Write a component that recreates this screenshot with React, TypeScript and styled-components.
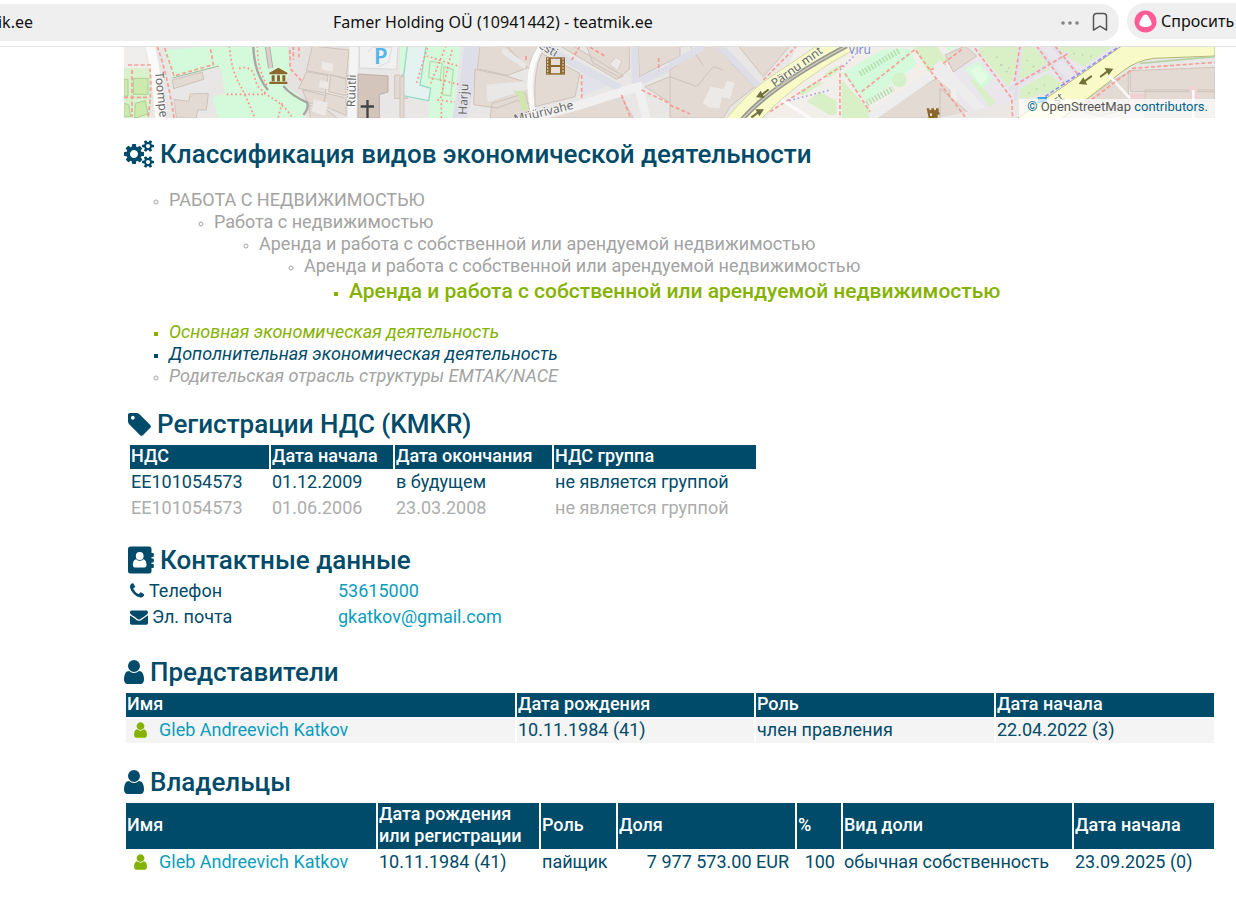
import React from 'react';
import styled, { createGlobalStyle } from 'styled-components';

const navy = '#004b69';
const cyan = '#0a9dbd';
const lime = '#85b200';
const muted = '#a3a3a3';

const GlobalStyle = createGlobalStyle`
  body {
    margin: 0;
    background: #fff;
    color: ${navy};
    font-family: Roboto, "Noto Sans", sans-serif;
    font-size: 18px;
    line-height: 22px;
    overflow-x: hidden;
  }
  * { box-sizing: border-box; }
`;

/* ---------- browser bar ---------- */

const BrowserBar = styled.header`
  display: flex;
  align-items: flex-start;
  gap: 8px;
  height: 47px;
  padding-top: 3px;
  border-bottom: 1px solid #e2e2e2;
  color: #111;
  font-family: "Noto Sans", sans-serif;
  font-size: 16px;
  overflow: hidden;
`;

const AddressField = styled.div`
  flex: 1;
  display: flex;
  align-items: center;
  height: 37px;
  margin-top: 1px;
  padding: 0 11px 2px 0;
  background: #efefef;
  border-radius: 0 18px 18px 0;
`;

const Domain = styled.span`
  width: 33px;
  display: flex;
  justify-content: flex-end;
  white-space: nowrap;
`;

const PageTitle = styled.span`
  flex: 1;
  padding-left: 300px;
  white-space: nowrap;
`;

const IconButton = styled.button`
  display: flex;
  margin: 0 0 0 12px;
  padding: 0;
  border: 0;
  background: none;
  cursor: pointer;
`;

const AskButton = styled.button`
  display: flex;
  align-items: center;
  gap: 4px;
  width: 109px;
  height: 36px;
  padding: 0 0 0 7px;
  border: 0;
  border-radius: 18px 0 0 18px;
  background: #efefef;
  color: #111;
  font: inherit;
  white-space: nowrap;
  overflow: hidden;
  cursor: pointer;
`;

const AskIcon = styled.svg`
  flex: none;
`;

/* ---------- page ---------- */

const Page = styled.main`
  padding: 0 20px 20px 124px;
`;

const MapFrame = styled.div`
  position: relative;
  height: 71px;
  margin-right: 1px;
  overflow: hidden;
  background: #e8e6e5;
`;

const MapCanvas = styled.svg`
  display: block;
  width: 100%;
  height: 100%;
`;

const Attribution = styled.div`
  position: absolute;
  right: 0;
  bottom: 0;
  padding: 0 7px 3px 8px;
  background: rgba(255, 255, 255, 0.7);
  color: #555;
  font-size: 13px;
  line-height: 16px;
  a { color: #00658a; text-decoration: none; }
`;

const Section = styled.section<{ $top: number; $inset?: boolean }>`
  margin-top: ${p => p.$top}px;
  padding-left: ${p => (p.$inset ? 4 : 0)}px;
`;

const Heading = styled.h2`
  display: flex;
  align-items: center;
  gap: 6px;
  margin: 0;
  font-size: 26px;
  line-height: 34px;
  font-weight: 500;
`;

const Glyph = styled.svg`
  display: block;
  flex: none;
  fill: currentColor;
`;

const Tree = styled.ul<{ $top?: number }>`
  margin: ${p => p.$top ?? 0}px 0 0;
  padding-left: 45px;
`;

type Kind = 'parent' | 'main' | 'extra';

const Activity = styled.li<{ $kind: Kind; $strong?: boolean; $italic?: boolean }>`
  list-style-type: ${p => (p.$kind === 'parent' ? 'circle' : 'square')};
  color: ${p => ({ parent: muted, main: lime, extra: navy })[p.$kind]};
  font-size: ${p => (p.$strong ? 21 : 18)}px;
  line-height: ${p => (p.$strong ? 28 : 22)}px;
  font-weight: ${p => (p.$strong ? 500 : 400)};
  font-style: ${p => (p.$italic ? 'italic' : 'normal')};
  &::marker { font-size: 14px; }
`;

const DataTable = styled.table<{ $wide?: boolean }>`
  width: ${p => (p.$wide ? '100%' : 'auto')};
  table-layout: fixed;
  border-spacing: 2px;
  border-collapse: separate;
  margin-top: 2px;
`;

const Col = styled.col<{ $w?: number }>`
  width: ${p => (p.$w ? `${p.$w}px` : 'auto')};
`;

const HeadCell = styled.th`
  padding: 0 1px 2px;
  background: ${navy};
  color: #fff;
  font-weight: 500;
  text-align: left;
  white-space: nowrap;
`;

const Cell = styled.td<{ $dim?: boolean; $shade?: boolean; $right?: boolean }>`
  height: 24px;
  padding: 0 ${p => (p.$right ? 6 : 1)}px 2px 1px;
  background: ${p => (p.$shade ? '#f4f4f4' : 'transparent')};
  color: ${p => (p.$dim ? '#adadad' : navy)};
  text-align: ${p => (p.$right ? 'right' : 'left')};
  white-space: nowrap;
`;

const Person = styled.span`
  display: flex;
  align-items: center;
  gap: 12px;
  padding-left: 7px;
  color: ${lime};
`;

const Link = styled.a`
  color: ${cyan};
  text-decoration: none;
`;

const Contacts = styled.dl`
  display: grid;
  grid-template-columns: 208px 1fr;
  row-gap: 4px;
  margin: 3px 0 0 2px;
`;

const ContactLabel = styled.dt`
  display: flex;
  align-items: center;
  gap: 4px;
`;

const ContactValue = styled.dd`
  margin: 0;
`;

/* ---------- icons ---------- */

const USER =
  'M1536 1399q0 109-62.5 187t-150.5 78h-854q-88 0-150.5-78t-62.5-187q0-85 8.5-160.5t31.5-152 58.5-131 94-89 134.5-34.5q131 128 313 128t313-128q76 0 134.5 34.5t94 89 58.5 131 31.5 152 8.5 160.5zm-256-887q0 159-112.5 271.5t-271.5 112.5-271.5-112.5-112.5-271.5 112.5-271.5 271.5-112.5 271.5 112.5 112.5 271.5z';
const TAG =
  'M576 448q0-53-37.5-90.5t-90.5-37.5-90.5 37.5-37.5 90.5 37.5 90.5 90.5 37.5 90.5-37.5 37.5-90.5zm1067 576q0 53-37 90l-491 492q-39 37-91 37-53 0-90-37l-715-716q-38-37-64.5-101t-26.5-117v-416q0-52 38-90t90-38h416q53 0 117 26.5t102 64.5l715 714q37 39 37 91z';
const ENVELOPE =
  'M1792 710v794q0 66-47 113t-113 47h-1472q-66 0-113-47t-47-113v-794q44 49 101 87 362 246 497 345 57 42 92.5 65.5t94.5 48 110 24.5h2q51 0 110-24.5t94.5-48 92.5-65.5q170-123 498-345 57-39 100-87zm0-294q0 79-49 151t-122 123q-376 261-468 325-10 7-42.5 31t-54 38.5-52 32.5-57.5 27-50 9h-2q-23 0-50-9t-57.5-27-52-32.5-54-38.5-42.5-31q-91-64-262-182.5t-205-142.5q-62-42-117-115.5t-55-136.5q0-78 41.5-130t118.5-52h1472q65 0 112.5 47t47.5 113z';
const PHONE =
  'M1600 1240q0 27-10 70.5t-21 68.5q-21 50-122 106-94 51-186 51-27 0-53-3.5t-57.5-12.5-47-14.5-55.5-20.5-49-18q-98-35-175-83-127-79-264-216t-216-264q-48-77-83-175-3-9-18-49t-20.5-55.5-14.5-47-12.5-57.5-3.5-53q0-92 51-186 56-101 106-122 25-11 68.5-21t70.5-10q14 0 21 3 18 6 53 76 11 19 30 54t35 63.5 31 53.5q3 4 17.5 25t21.5 35.5 7 28.5q0 20-28.5 50t-62 55-62 53-28.5 46q0 9 5 22.5t8.5 20.5 14 24 11.5 19q76 137 174 235t235 174q2 1 19 11.5t24 14 20.5 8.5 22.5 5q18 0 46-28.5t53-62 55-62 50-28.5q14 0 28.5 7t35.5 21.5 25 17.5q25 15 53.5 31t63.5 35 54 30q70 35 76 53 3 7 3 21z';
const COGS =
  'M896 896q0-106-75-181t-181-75-181 75-75 181 75 181 181 75 181-75 75-181zm768 512q0-52-38-90t-90-38-90 38-38 90q0 53 37.5 90.5t90.5 37.5 90.5-37.5 37.5-90.5zm0-1024q0-52-38-90t-90-38-90 38-38 90q0 53 37.5 90.5t90.5 37.5 90.5-37.5 37.5-90.5zm-384 421v185q0 10-7 19.5t-16 10.5l-155 24q-11 35-32 76 34 48 90 115 7 11 7 20 0 12-7 19-23 30-82.5 89.5t-78.5 59.5q-11 0-21-7l-115-90q-37 19-77 31-11 108-23 155-7 24-30 24h-186q-11 0-20-7.5t-10-17.5l-23-153q-34-10-75-31l-118 89q-7 7-20 7-11 0-21-8-144-133-144-160 0-9 7-19 10-14 41-53t47-61q-23-44-35-82l-152-24q-10-1-17-9.5t-7-19.5v-185q0-10 7-19.5t16-10.5l155-24q11-35 32-76-34-48-90-115-7-11-7-20 0-12 7-20 22-30 82-89t79-59q11 0 21 7l115 90q34-18 77-32 11-108 23-154 7-24 30-24h186q11 0 20 7.5t10 17.5l23 153q34 10 75 31l118-89q8-7 20-7 11 0 21 8 144 133 144 160 0 8-7 19-12 16-42 54t-45 60q23 48 34 82l152 23q10 2 17 10.5t7 19.5zm640 533v140q0 16-149 31-12 27-30 52 51 113 51 138 0 4-4 7-122 71-124 71-8 0-46-47t-52-68q-20 2-30 2t-30-2q-14 21-52 68t-46 47q-2 0-124-71-4-3-4-7 0-25 51-138-18-25-30-52-149-15-149-31v-140q0-16 149-31 13-29 30-52-51-113-51-138 0-4 4-7 4-2 35-20t59-34 30-16q8 0 46 46.5t52 67.5q20-2 30-2t30 2q51-71 92-112l6-2q4 0 124 70 4 3 4 7 0 25-51 138 17 23 30 52 149 15 149 31zm0-1024v140q0 16-149 31-12 27-30 52 51 113 51 138 0 4-4 7-122 71-124 71-8 0-46-47t-52-68q-20 2-30 2t-30-2q-14 21-52 68t-46 47q-2 0-124-71-4-3-4-7 0-25 51-138-18-25-30-52-149-15-149-31v-140q0-16 149-31 13-29 30-52-51-113-51-138 0-4 4-7 4-2 35-20t59-34 30-16q8 0 46 46.5t52 67.5q20-2 30-2t30 2q51-71 92-112l6-2q4 0 124 70 4 3 4 7 0 25-51 138 17 23 30 52 149 15 149 31z';

const UserIcon = ({ size = 28 }: { size?: number }) => (
  <Glyph width={Math.round((size * 5) / 7)} height={size} viewBox="256 0 1280 1792" aria-hidden>
    <path d={USER} />
  </Glyph>
);

const AddressBookIcon = () => (
  <Glyph width="26" height="28" viewBox="0 0 26 28" aria-hidden>
    <path
      d="M2.500 .5H21a2.500 2.500 0 0 1 2.500 2.500V7H25a.8.8 0 0 1 .8.8v2.400a.8.8 0 0 1-.8.8h-1.500v1.500H25a.8.8 0 0 1 .8.8v2.400a.8.8 0 0 1-.8.8h-1.500V18H25a.8.8 0 0 1 .8.8v2.400a.8.8 0 0 1-.8.8h-1.500v3a2.500 2.500 0 0 1-2.500 2.500H2.500A2.500 2.500 0 0 1 0 25V3A2.500 2.500 0 0 1 2.500 .5z"
    />
    <circle cx="11.700" cy="10" r="3.900" fill="#fff" />
    <path d="M8.300 13.200c2 2 4.800 2 6.800 0 2.600.3 3.400 3.200 3.400 5.800 0 1.600-.8 2.500-2 2.500H7c-1.300 0-2.100-.9-2.100-2.500 0-2.600.8-5.500 3.400-5.800z" fill="#fff" />
  </Glyph>
);

/* ---------- map ---------- */

const Building = styled.path`
  fill: #e2dad3;
  stroke: #cfc3b9;
  stroke-width: 3;
`;
const Park = styled.path<{ $grass?: boolean }>`
  fill: ${p => (p.$grass ? '#d9efc6' : '#d5fadb')};
`;
const Street = styled.path<{ $w: number; $c?: string }>`
  fill: none;
  stroke: ${p => p.$c ?? '#fafafa'};
  stroke-width: ${p => p.$w};
`;
const Footway = styled.path<{ $c?: string }>`
  fill: none;
  stroke: ${p => p.$c ?? '#fb8f86'};
  stroke-width: 5;
  stroke-dasharray: 12 7;
  opacity: 0.85;
`;
const Dots = styled.path<{ $c?: string; $sparse?: boolean }>`
  fill: none;
  stroke: ${p => p.$c ?? '#fb8f86'};
  stroke-width: 5;
  stroke-dasharray: ${p => (p.$sparse ? '4 22' : '5 8')};
`;
const MapLabel = styled.text<{ $c?: string }>`
  fill: ${p => p.$c ?? '#666'};
  font-family: "Noto Sans", sans-serif;
  font-size: 36px;
  paint-order: stroke;
  stroke: rgba(255, 255, 255, 0.6);
  stroke-width: 4;
`;

const CityMap = () => (
  <MapCanvas viewBox="0 21 3273 213" preserveAspectRatio="xMinYMin slice" role="img" aria-label="OpenStreetMap">
    <rect y="18" width="3273" height="216" fill="#e8e7e6" />

    {/* Toompea park and town wall */}
    <g>
      <path d="M0 18H60L75 85H0z" fill="#efeeed" />
      <path d="M0 85H82L75 234H0z" fill="#d9f2cb" />
      <path d="M28 115h44v48H28zM0 118h12v50H0zM34 190l30-8 8 40-40 12zM0 190l14 4 6 36H0z" fill="#cdeaae" stroke="#abd097" strokeWidth="3" />
      <Street $w={28} d="M75 10Q95 70 108 240" />
      <Park d="M120 30L265 18H535V90L480 130L548 185L540 234H282L265 172L304 162L290 80L145 113z" />
      <path d="M490 18H700V234H545L550 185L480 132L500 90z" fill="#e5e2e0" />
      <Building d="M145 120l90-24 4 22-90 28zM150 178l44 6 5-22 54-2-6 50h-26l-4 24h-60z" />
      <Building d="M565 18l110 12-8 84-120-22zM548 95l64 12-8 52-80-14zM620 105l46 12v50l-52-12zM535 150l70 16-8 30-46-8zM606 160l60 14v52l-70-30zM555 195l48 10 50 40H560z" />
      <path d="M592 65l36 6-2 24-32-6zM588 120l26 6-2 22-28-6zM570 178l42 10-8 40-42-14z" fill="#ece9e7" />
      <Street $w={7} $c="#a9a5a3" d="M388 18Q390 100 432 150M478 138Q500 165 550 188Q555 205 538 225" />
      <Street $w={16} $c="#b6afab" d="M430 18L440 84" />
      <Street $w={10} $c="#ddd0ca" d="M430 18L440 84" />
      <path d="M145 114L285 78" stroke="#9fb7a0" strokeWidth="3" />
      <Footway d="M122 24L150 108L268 74L258 18M100 20Q132 110 150 234M12 75h70M24 90v140M78 85q6 70-6 149M0 172h75" />
      <Dots d="M316 18Q322 90 345 130T392 234M345 85Q385 75 392 112T430 160M308 163H420M420 160Q480 190 505 234M474 190L462 234M400 18Q400 90 432 140" />
      <Footway d="M508 18V60M525 22V52M498 30V85L532 122" />
      <path d="M436 98L463 83L490 98v5h-54zM443 106h9v18h-9zM459 106h9v18h-9zM475 106h9v18h-9zM436 125h54v7h-54z" fill="#8b682d" />
      <Street $w={26} $c="#f4f4f4" d="M690 18L684 234" />
      <path d="M706 18H822L818 88L706 84z" fill="#f1f1f1" stroke="#d8d8d8" strokeWidth="3" />
      <path d="M732 36l12-14h60l-10 44-30 14" fill="none" stroke="#dcdcdc" strokeWidth="3" />
      <path d="M702 102l90 6v48l-26 8v70h-64z" fill="#d3c5bc" stroke="#bfafa5" strokeWidth="3" />
      <path d="M727 180h7v16h16v7h-16v31h-7v-31h-17v-7h17z" fill="#444" />
      <text x="750" y="71" fontFamily="Noto Sans, sans-serif" fontSize="66" fontWeight="600" fill="#55b5ea">P</text>
      <Building d="M812 105h40v70h-40z" />
      <MapLabel transform="translate(93 97) rotate(84)">Toompea</MapLabel>
      <MapLabel transform="translate(693 202) rotate(-88)">Rüütli</MapLabel>
    </g>

    {/* Harju street and the cinema quarter */}
    <g transform="translate(828 0)">
      <Park d="M0 18H182L158 234H85L90 185L4 168L22 60L0 110z" />
      <path d="M22 18H78L60 135L92 145L86 182L4 166z" fill="#e4f3f0" stroke="#9bd8c8" strokeWidth="4" />
      <Building d="M0 110h12v124H0z" />
      <path d="M90 64l36 6-6 50-34-8zM132 80l28 8-8 80-24-4z" fill="none" stroke="#b9dcae" strokeWidth="4" />
      <Dots d="M82 24L50 128M80 48L180 80M138 18L92 130M156 30L120 180M120 120L180 134M112 180L165 186M124 190V234" />
      <Street $w={44} $c="#dedee9" d="M215 10Q208 110 178 240" />
      <Building d="M240 18h78l64 66-60 22-90-20zM225 88l94 20 76 24-4 60-40-10-60 22-70-10zM325 18h90q-30 50-26 70l-60-60zM276 190l100-30 20 74H270z" />
      <path d="M260 134l130-12-2 24-125 40zM310 22l70 50-6 14-70-46z" fill="#e9e8e7" />
      <path d="M340 153h30l14 55-17 6-12-46z" fill="#cfe8ae" />
      <Street $w={16} d="M425 18Q370 90 402 225" />
      <Building d="M425 40L540 100L525 170L405 200Q400 90 425 40zM480 18h40l150 90-20 10zM560 18h128v70l-30 24-80-44zM715 18h125v30L718 110zM735 140l105-42v110zM420 234l240-70 40 70z" />
      <path d="M548 95l82 40-84 32z" fill="#e2e2eb" />
      <Street $w={22} $c="#dedee9" d="M425 18L660 145M704 18L706 130L850 66" />
      <Street $w={26} $c="#f1f0f0" d="M340 250L540 195L715 140L740 240" />
      <path d="M628 72l20-20 18 10-14 30z" fill="#ece9e7" stroke="#cfc3b9" strokeWidth="2" />
      <Footway d="M545 105V180M540 18L515 60M570 22L615 48M725 150L840 205M665 165L690 230M378 48v12M776 54v40" />
      <rect x="438" y="52" width="57" height="52" fill="#8b682d" />
      <path d="M453 56h27v19h-27zM453 81h27v19h-27z" fill="#e7dfd5" />
      <path d="M443 55v46M489 55v46" stroke="#e7dfd5" strokeWidth="4" strokeDasharray="4 5" />
      <MapLabel transform="translate(200 225) rotate(-87)">Harju</MapLabel>
      <MapLabel transform="translate(345 250) rotate(-14)">Müürivahe</MapLabel>
      <MapLabel transform="translate(413 22) rotate(30)">esti</MapLabel>
    </g>

    {/* Pärnu road and the square by Viru street */}
    <g transform="translate(1638 0)">
      <Building d="M0 90L70 40L108 18H150L185 70L255 140L180 200L160 234H0zM205 18H360L280 110z" />
      <path d="M98 190l24-50 40 8 8-26 24 6-14 48-24-4-8 34-32-4z" fill="#ece9e7" />
      <path d="M0 110l80 30 50-60 30 10M60 18l40 60" fill="none" stroke="#cfc3b9" strokeWidth="3" />
      <Street $w={20} $c="#dedee9" d="M0 76L100 20M150 18L272 145" />
      <path d="M380 18H860V234H290z" fill="#f2efeb" />
      <Park d="M515 100L640 28L720 25L740 75L590 185z" />
      <Park $grass d="M515 120L605 215L600 234H515zM730 22L800 18L832 62L776 98zM385 155l64-36 8 12-60 36zM465 100l40-24 12 10-44 28zM410 184l40-28 50 26v40l-20 4z" />
      <circle cx="688" cy="120" r="22" fill="#d3f2c9" />
      <path d="M570 102L690 30M590 190L670 145" stroke="#b6dfb0" strokeWidth="18" strokeDasharray="5 5" />
      <Building d="M616 234L765 135L840 90V234z" />
      <Street $w={26} $c="#eeeeee" d="M600 234L800 96L850 140" />
      <path d="M165 240Q240 150 300 112L440 18H570Q380 120 270 240z" fill="#f8fbc8" stroke="#d6d8a0" strokeWidth="3" />
      <Street $w={14} $c="#999791" d="M215 240Q300 140 530 18" />
      <Street $w={4} $c="#d0d0bd" d="M215 240Q300 140 530 18" />
      <Footway d="M280 120L380 18M300 215L520 75M510 100V234M525 100L600 215M575 155L735 28L800 118M0 195L60 222M780 90L850 65" />
      <Dots $c="#a5a4df" d="M345 185L480 150M510 90l60-60" />
      <Street $w={10} d="M335 180L430 240" />
      <path d="M258 172l14-20 4 8 18-14 4 5-19 14 5 9zM282 208l-14 21-4-8-18 14-4-5 19-14-5-8z" fill="#707040" />
      <path d="M770 205h8v5h6v-5h8v5h6v-5h8v12h8v-4h6v4h6v-4h8v21h-58z" fill="#8b682d" />
      <path d="M780 220h6v8h-6zM803 224h14v10h-14z" fill="#e2dad3" />
      <MapLabel transform="translate(315 143) rotate(-36)">Pärnu mnt</MapLabel>
      <MapLabel $c="#7f88cf" x="535" y="42">Viru</MapLabel>
    </g>

    {/* Estonia avenue */}
    <g transform="translate(2448 0)">
      <path d="M30 18H560L225 234H60z" fill="#e9e7ec" />
      <Park $grass d="M120 18H234L225 100L205 140L120 40zM110 120L165 185L150 200L90 120zM248 18H290L330 90L240 120zM330 18H520L430 80zM240 145L325 100L370 135L270 200L238 190z" />
      <Park d="M20 18h36l-30 18zM74 88l40-25 44 50-28 34z" />
      <path d="M92 92l24-14 28 34-22 22z" fill="#e4fbe6" />
      <Building d="M15 45l60-27 35 30-70 48zM0 145L110 240H0z" />
      <Street $w={30} $c="#ededed" d="M-10 70L50 132L150 240" />
      <Street $w={14} $c="#e2e1ea" d="M240 18L222 234M290 18L380 130M205 150L385 40M340 18L420 110" />
      <path d="M0 234H825V70L620 80L520 115z" fill="#ebe7e5" />
      <Building d="M570 92L825 82V155H572zM615 150H825V234H615zM510 128l55-30v110l-90 20-80-20z" />
      <path d="M570 160h42v40h-42zM748 140h24v40h-24z" fill="#f1d2d3" />
      <path d="M225 240L545 18H825V48L640 55Q590 62 550 92L360 240z" fill="#f8fbc8" stroke="#b4b674" strokeWidth="3" />
      <path d="M600 70L825 50" stroke="#b9d2a4" strokeWidth="5" />
      <Street $w={8} d="M510 110L570 175M760 150V234" />
      <Footway d="M105 25L215 175L218 234M240 18L222 130M290 18L375 135M225 135L385 40M345 18L415 105M440 190L580 85L825 67M10 70L70 25M0 130L75 230" />
      <Footway $c="#8080fa" d="M300 180L540 18" />
      <rect x="293" y="171" width="28" height="18" fill="#3aa7e8" />
      <path d="M416 132l14-20 4 8 20-15 3 5-20 15 5 9zM520 86l-14 20-4-8-20 15-3-5 20-15-5-9z" fill="#6f6f38" />
      <Dots $sparse $c="#b5d5a3" d="M170 50l40 60M180 75l30 10M260 60l40 40M265 160l60-30M400 40l60 10" />
      <MapLabel transform="translate(350 195) rotate(-36)">st</MapLabel>
    </g>
  </MapCanvas>
);

/* ---------- content ---------- */

const chain = [
  'РАБОТА С НЕДВИЖИМОСТЬЮ',
  'Работа с недвижимостью',
  'Аренда и работа с собственной или арендуемой недвижимостью',
  'Аренда и работа с собственной или арендуемой недвижимостью',
  'Аренда и работа с собственной или арендуемой недвижимостью',
];

const ActivityChain = ({ level = 0 }: { level?: number }) => {
  const last = level === chain.length - 1;
  return (
    <Tree $top={level === 0 ? 18 : 0}>
      <Activity $kind={last ? 'main' : 'parent'} $strong={last}>
        {chain[level]}
        {!last && <ActivityChain level={level + 1} />}
      </Activity>
    </Tree>
  );
};

const vatRows = [
  ['EE101054573', '01.12.2009', 'в будущем', 'не является группой'],
  ['EE101054573', '01.06.2006', '23.03.2008', 'не является группой'],
];

const HeadRow = ({ labels }: { labels: React.ReactNode[] }) => (
  <thead>
    <tr>
      {labels.map((label, i) => (
        <HeadCell key={i} scope="col">{label}</HeadCell>
      ))}
    </tr>
  </thead>
);

const PersonLink = () => (
  <Person>
    <UserIcon size={18} />
    <Link href="#katkov">Gleb Andreevich Katkov</Link>
  </Person>
);

export default function App() {
  return (
    <>
      <GlobalStyle />
      <BrowserBar>
        <AddressField>
          <Domain>ik.ee</Domain>
          <PageTitle>Famer Holding OÜ (10941442) - teatmik.ee</PageTitle>
          <IconButton aria-label="Меню">
            <svg width="20" height="20" viewBox="0 0 20 20" fill="#858585">
              <circle cx="3" cy="11" r="1.800" />
              <circle cx="10" cy="11" r="1.800" />
              <circle cx="17" cy="11" r="1.800" />
            </svg>
          </IconButton>
          <IconButton aria-label="Закладка">
            <svg width="16" height="20" viewBox="0 0 16 20" fill="none" stroke="#555" strokeWidth="1.500">
              <path d="M1.500 18.200V4.500a3 3 0 0 1 3-3h7a3 3 0 0 1 3 3v13.700L8 14.200z" strokeLinejoin="round" />
            </svg>
          </IconButton>
        </AddressField>
        <AskButton>
          <AskIcon width="23" height="23" viewBox="0 0 23 23" aria-hidden>
            <circle cx="11.500" cy="11.500" r="11" fill="#ff5c95" />
            <path d="M11.500 4.500c1.500 0 2.400 1 3.600 3 1.400 2.400 2.600 4.600 2.600 6.200 0 2.300-3.400 3.200-6.200 3.200s-6.200-.9-6.200-3.200c0-1.600 1.200-3.800 2.600-6.200 1.200-2 2.100-3 3.600-3z" fill="#fff" />
          </AskIcon>
          Спросить
        </AskButton>
      </BrowserBar>

      <Page>
        <MapFrame>
          <CityMap />
          <Attribution>
            <a href="#copyright">©</a> OpenStreetMap <a href="#contributors">contributors.</a>
          </Attribution>
        </MapFrame>

        <Section $top={19}>
          <Heading>
            <Glyph width="30" height="28" viewBox="0 0 1920 1792" aria-hidden><path d={COGS} /></Glyph>
            Классификация видов экономической деятельности
          </Heading>
          <ActivityChain />
          <Tree $top={16}>
            <Activity $kind="main" $italic>Основная экономическая деятельность</Activity>
            <Activity $kind="extra" $italic>Дополнительная экономическая деятельность</Activity>
            <Activity $kind="parent" $italic>Родительская отрасль структуры EMTAK/NACE</Activity>
          </Tree>
        </Section>

        <Section $top={20} $inset>
          <Heading>
            <Glyph width="23" height="27" viewBox="128 0 1526 1792" aria-hidden><path d={TAG} /></Glyph>
            Регистрации НДС (KMKR)
          </Heading>
          <DataTable>
            <colgroup>
              <Col $w={139} /><Col $w={122} /><Col $w={157} /><Col $w={202} />
            </colgroup>
            <HeadRow labels={['НДС', 'Дата начала', 'Дата окончания', 'НДС группа']} />
            <tbody>
              {vatRows.map((row, r) => (
                <tr key={r}>
                  {row.map((value, i) => (
                    <Cell key={i} $dim={r === 1}>{value}</Cell>
                  ))}
                </tr>
              ))}
            </tbody>
          </DataTable>
        </Section>

        <Section $top={20} $inset>
          <Heading>
            <AddressBookIcon />
            Контактные данные
          </Heading>
          <Contacts>
            <ContactLabel>
              <Glyph width="15" height="18" viewBox="192 0 1493 1792" aria-hidden><path d={PHONE} /></Glyph>
              Телефон
            </ContactLabel>
            <ContactValue><Link href="tel:53615000">53615000</Link></ContactValue>
            <ContactLabel>
              <Glyph width="18" height="18" viewBox="0 0 1792 1792" aria-hidden><path d={ENVELOPE} /></Glyph>
              Эл. почта
            </ContactLabel>
            <ContactValue><Link href="mailto:gkatkov@gmail.com">gkatkov@gmail.com</Link></ContactValue>
          </Contacts>
        </Section>

        <Section $top={27}>
          <Heading><UserIcon />Представители</Heading>
          <DataTable $wide>
            <colgroup>
              <Col /><Col $w={237} /><Col $w={238} /><Col $w={218} />
            </colgroup>
            <HeadRow labels={['Имя', 'Дата рождения', 'Роль', 'Дата начала']} />
            <tbody>
              <tr>
                <Cell $shade><PersonLink /></Cell>
                <Cell $shade>10.11.1984 (41)</Cell>
                <Cell $shade>член правления</Cell>
                <Cell $shade>22.04.2022 (3)</Cell>
              </tr>
            </tbody>
          </DataTable>
        </Section>

        <Section $top={20}>
          <Heading><UserIcon />Владельцы</Heading>
          <DataTable $wide>
            <colgroup>
              <Col /><Col $w={161} /><Col $w={75} /><Col $w={177} /><Col $w={44} /><Col $w={229} /><Col $w={140} />
            </colgroup>
            <HeadRow
              labels={['Имя', <>Дата рождения<br />или регистрации</>, 'Роль', 'Доля', '%', 'Вид доли', 'Дата начала']}
            />
            <tbody>
              <tr>
                <Cell><PersonLink /></Cell>
                <Cell>10.11.1984 (41)</Cell>
                <Cell>пайщик</Cell>
                <Cell $right>7 977 573.00 EUR</Cell>
                <Cell $right>100</Cell>
                <Cell>обычная собственность</Cell>
                <Cell>23.09.2025 (0)</Cell>
              </tr>
            </tbody>
          </DataTable>
        </Section>
      </Page>
    </>
  );
}
